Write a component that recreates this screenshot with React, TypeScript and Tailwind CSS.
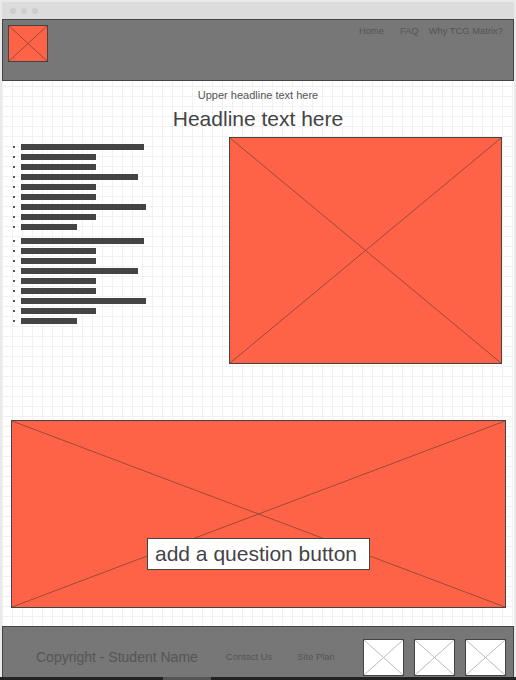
import React from 'react';

const groupWidths = [123, 75, 75, 117, 75, 75, 125, 75, 56];

function XBox({ className, stroke }: { className: string; stroke: string }) {
  return (
    <div className={className}>
      <svg className="absolute inset-0 w-full h-full" viewBox="0 0 100 100" preserveAspectRatio="none">
        <line x1="0" y1="0" x2="100" y2="100" stroke={stroke} strokeWidth="1" vectorEffect="non-scaling-stroke" />
        <line x1="100" y1="0" x2="0" y2="100" stroke={stroke} strokeWidth="1" vectorEffect="non-scaling-stroke" />
      </svg>
    </div>
  );
}

function BarList() {
  return (
    <ul className="flex flex-col">
      {groupWidths.map((w, i) => (
        <li key={i} className="h-[10px] flex items-center">
          <span className="w-[2px] h-[2px] bg-[#555] ml-[11px]" />
          <span className="h-[6px] bg-[#444] ml-[6px]" style={{ width: w }} />
        </li>
      ))}
    </ul>
  );
}

export default function App() {
  return (
    <div
      className="w-[516px] h-[680px] overflow-hidden bg-[#e9e9e9] px-[2px] pt-[2px] flex flex-col"
      style={{ fontFamily: '"Liberation Sans", Arial, sans-serif' }}
    >
      {/* title bar */}
      <div className="h-[17px] shrink-0 bg-[#dcdcdc] flex items-center gap-[5px] pl-[8px]">
        <span className="w-[6px] h-[6px] rounded-full bg-[#cdcdcd]" />
        <span className="w-[6px] h-[6px] rounded-full bg-[#cdcdcd]" />
        <span className="w-[6px] h-[6px] rounded-full bg-[#cdcdcd]" />
      </div>

      {/* header */}
      <div className="h-[62px] bg-[#777] border border-[#444] flex justify-between shrink-0">
        <XBox className="relative w-[40px] h-[37px] ml-[5px] mt-[5px] bg-[#ff6347] border border-[#444]" stroke="#9a4a3a" />
        <nav className="flex pt-[5px] pr-[10px] text-[9.4px] leading-[11px] text-[#555]">
          <span>Home</span>
          <span className="ml-[16px]">FAQ</span>
          <span className="ml-[10px]">Why TCG Matrix?</span>
        </nav>
      </div>

      {/* content */}
      <div className="h-[545px] shrink-0 overflow-hidden bg-white bg-[linear-gradient(to_right,#f1f1f1_1px,transparent_1px),linear-gradient(to_bottom,#f1f1f1_1px,transparent_1px)] [background-size:10px_10px] [background-position:0px_5px] flex flex-col">
        <p className="mt-[8px] text-center text-[11px] leading-[13px] text-[#555]">Upper headline text here</p>
        <h1 className="mt-[5px] text-center text-[21px] leading-[24px] text-[#444]">Headline text here</h1>

        <div className="mt-[6px] flex justify-between">
          <div className="pt-[5px] flex flex-col gap-[4px]">
            <BarList />
            <BarList />
          </div>
          <XBox className="relative w-[273px] h-[227px] mr-[12px] bg-[#ff6347] border border-[#444]" stroke="#9a4a3a" />
        </div>

        <div className="mt-[56px] ml-[9px] relative w-[495px] h-[188px] bg-[#ff6347] border border-[#444] flex items-end justify-center pb-[37px]">
          <svg className="absolute inset-0 w-full h-full" viewBox="0 0 100 100" preserveAspectRatio="none">
            <line x1="0" y1="0" x2="100" y2="100" stroke="#9a4a3a" strokeWidth="1" vectorEffect="non-scaling-stroke" />
            <line x1="100" y1="0" x2="0" y2="100" stroke="#9a4a3a" strokeWidth="1" vectorEffect="non-scaling-stroke" />
          </svg>
          <button className="relative w-[223px] h-[32px] bg-white border border-[#444] text-[21px] leading-[30px] text-[#444] pl-[7px] text-left whitespace-nowrap">
            add a question button
          </button>
        </div>
      </div>

      {/* footer */}
      <div className="h-[51px] bg-[#777] border border-[#444] border-b-0 flex items-start pt-[12px] pr-[7px] shrink-0">
        <div className="h-[37px] flex items-center w-full">
          <span className="ml-[33px] text-[14px] text-[#555]">Copyright - Student Name</span>
          <span className="ml-[28px] text-[9.4px] text-[#555]">Contact Us</span>
          <span className="ml-[25px] text-[9.4px] text-[#555]">Site Plan</span>
          <div className="ml-auto flex gap-[10px]">
            <XBox className="relative w-[41px] h-[37px] bg-white border border-[#444]" stroke="#bbbbbb" />
            <XBox className="relative w-[41px] h-[37px] bg-white border border-[#444]" stroke="#bbbbbb" />
            <XBox className="relative w-[41px] h-[37px] bg-white border border-[#444]" stroke="#bbbbbb" />
          </div>
        </div>
      </div>
      <div className="h-[3px] -mx-[2px] bg-[#222] shrink-0 flex">
        <span className="ml-[163px] w-[48px] bg-[#555]" />
      </div>
    </div>
  );
}
